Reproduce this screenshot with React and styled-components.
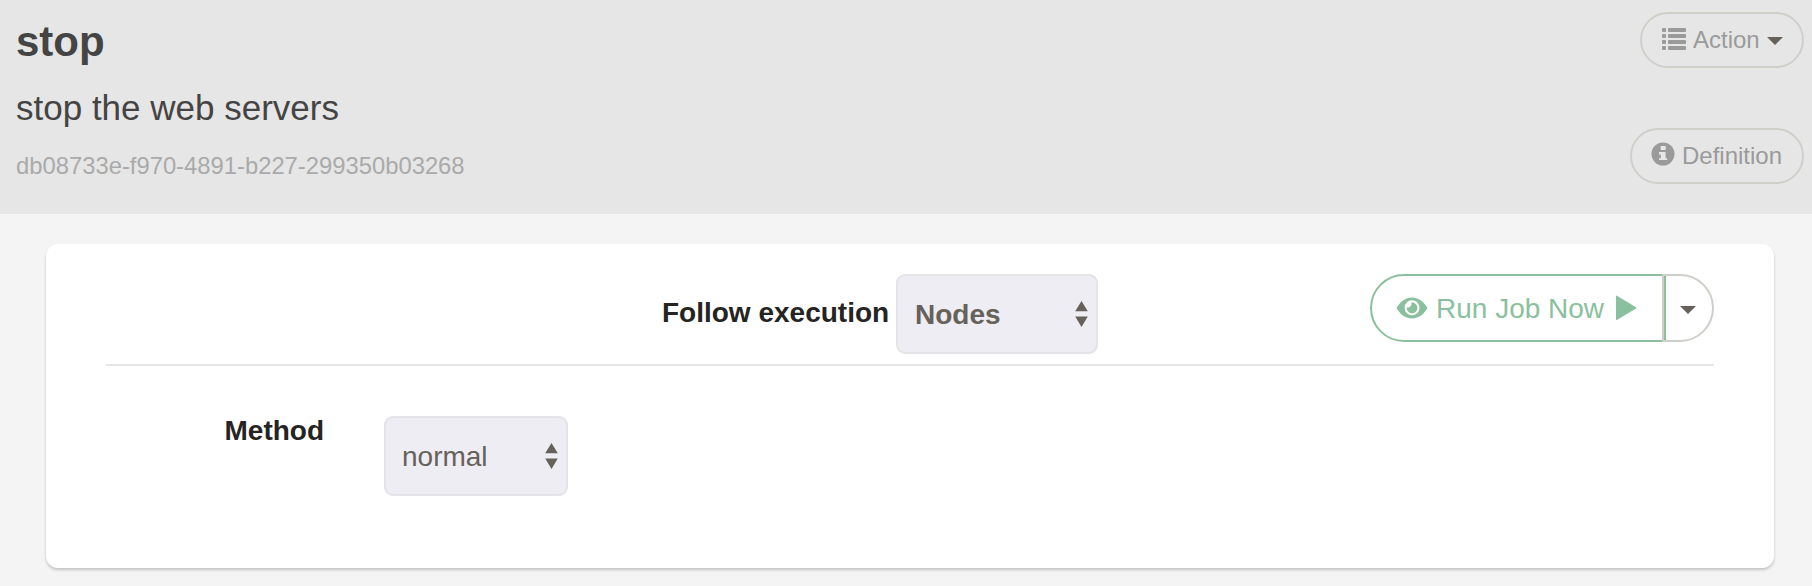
import React from "react";
import styled, { createGlobalStyle } from "styled-components";

const GlobalStyle = createGlobalStyle`
  * { box-sizing: border-box; }
  body {
    margin: 0;
    background: #f4f4f4;
    font-family: "Liberation Sans", Arial, Helvetica, sans-serif;
  }
  svg { display: block; flex: none; }
`;

const Page = styled.div`
  min-height: 586px;
`;

const Header = styled.header`
  display: flex;
  justify-content: space-between;
  height: 214px;
  padding: 12px 8px 30px 16px;
  background: #e6e6e6;
`;

const JobInfo = styled.div`
  display: flex;
  flex-direction: column;
`;

const Title = styled.h1`
  margin: 6px 0 0;
  font-size: 42px;
  line-height: 48px;
  color: #444;
`;

const Description = styled.p`
  margin: 22px 0 0;
  font-size: 35px;
  line-height: 40px;
  color: #444;
`;

const JobId = styled.small`
  margin-top: 24px;
  font-size: 23.8px;
  line-height: 28px;
  color: #aaa;
`;

const HeaderActions = styled.div`
  display: flex;
  flex-direction: column;
  align-items: flex-end;
  justify-content: space-between;
`;

const PillButton = styled.button`
  display: flex;
  align-items: center;
  width: ${(p) => p.$width}px;
  height: 56px;
  padding: 0 0 1px ${(p) => p.$inset}px;
  border: 2px solid #cfcfca;
  border-radius: 28px;
  background: transparent;
  color: #9a9a9a;
  font: 24px "Liberation Sans", Arial, sans-serif;
  white-space: nowrap;

  > svg:first-child {
    margin-bottom: ${(p) => p.$iconLift}px;
  }

  > svg:last-child {
    margin-top: 3px;
  }
`;

const PillLabel = styled.span`
  margin: 0 7px 0 ${(p) => p.$gap}px;
`;

const Card = styled.main`
  height: 324px;
  margin: 30px 38px 0 46px;
  padding: 30px 60px;
  border-radius: 12px;
  background: #fff;
  box-shadow: 0 2px 3px rgba(0, 0, 0, 0.2);
`;

const RunBar = styled.div`
  display: flex;
  align-items: flex-start;
  height: 92px;
  padding-left: 556px;
  border-bottom: 2px solid #e5e5e5;
`;

const OptionRow = styled.div`
  display: flex;
  align-items: flex-start;
  padding: 50px 0 0 118.5px;
`;

const Label = styled.label`
  width: ${(p) => p.$width}px;
  padding-top: ${(p) => p.$top}px;
  color: #252422;
  font-size: 28px;
  font-weight: bold;
  line-height: 30px;
  white-space: nowrap;
`;

const SelectBox = styled.div`
  display: flex;
  align-items: center;
  justify-content: space-between;
  width: ${(p) => p.$width}px;
  height: 80px;
  padding: 0 8px 0 ${(p) => p.$inset}px;
  border: 2px solid #e3e3e8;
  border-radius: 9px;
  background: #eeedf3;
  color: #66615b;
  font-size: 28px;
  font-weight: ${(p) => (p.$bold ? "bold" : "normal")};
`;

const SelectValue = styled.span`
  padding-top: 2px;
`;

const ButtonGroup = styled.div`
  display: flex;
  margin-left: auto;
`;

const RunButton = styled.button`
  display: flex;
  align-items: center;
  width: 296px;
  height: 68px;
  padding: 0 0 0 24px;
  border: 2px solid #8bc09e;
  border-radius: 34px 0 0 34px;
  background: transparent;
  color: #8bc09e;
  font: 28px "Liberation Sans", Arial, sans-serif;
  white-space: nowrap;

  > svg {
    margin-bottom: 1px;
  }
`;

const RunLabel = styled.span`
  margin: 0 12px 0 8px;
  padding-top: 1px;
`;

const RunMenuButton = styled.button`
  display: flex;
  align-items: center;
  justify-content: center;
  width: 52px;
  height: 68px;
  margin-left: -4px;
  padding: 4px 0 0;
  border: 2px solid #cfcfca;
  border-radius: 0 34px 34px 0;
  background: transparent;
`;

const ListIcon = () => (
  <svg width="24" height="22" viewBox="0 0 24 22" fill="currentColor">
    {[0, 6, 12, 18].map((y) => (
      <React.Fragment key={y}>
        <rect x="0" y={y} width="4" height="4" rx="1" />
        <rect x="6" y={y} width="18" height="4" rx="1" />
      </React.Fragment>
    ))}
  </svg>
);

const InfoIcon = () => (
  <svg width="24" height="24" viewBox="0 0 24 24" fill="currentColor">
    <path
      fillRule="evenodd"
      d="M12 .5a11.5 11.5 0 1 1 0 23a11.5 11.5 0 0 1 0-23zM9.7 4v4h5V4zM8 10v2.5h1.8v3.8H8V18h8.2v-1.7h-1.6V10z"
    />
  </svg>
);

const EyeIcon = () => (
  <svg width="32" height="22" viewBox="0 0 32 22">
    <path
      fill="currentColor"
      fillRule="evenodd"
      d="M.5 11C4.5 4 10 .5 16 .5S27.500 4 31.500 11C27.500 18 22 21.500 16 21.500S4.500 18 .5 11zM16 3.300a7.500 7.500 0 1 0 0 15a7.500 7.500 0 0 0 0-15z"
    />
    <path
      fill="currentColor"
      d="M15.200 5.500A5.400 5.400 0 1 1 10.700 10C11.200 10.700 12.200 10.800 13.400 10.200C15.200 9.200 15.900 7.600 15.200 5.500z"
    />
  </svg>
);

const PlayIcon = () => (
  <svg width="21" height="26" viewBox="0 0 21 26" fill="currentColor">
    <path d="M0 1.200Q0 .3 .9 .7L20 12.200Q21 13 20 13.600L.9 25.100Q0 25.500 0 24.600z" />
  </svg>
);

const CaretIcon = () => (
  <svg width="16" height="8" viewBox="0 0 16 8" fill="#66615b">
    <path d="M0 0h16L8 8z" />
  </svg>
);

const StepperIcon = () => (
  <svg width="13" height="26" viewBox="0 0 13 26" fill="#66615b">
    <path d="M6.500 0L12.800 10.300H.2zM.2 15.500h12.600L6.500 26z" />
  </svg>
);

export default function App() {
  return (
    <Page>
      <GlobalStyle />
      <Header>
        <JobInfo>
          <Title>stop</Title>
          <Description>stop the web servers</Description>
          <JobId>db08733e-f970-4891-b227-299350b03268</JobId>
        </JobInfo>
        <HeaderActions>
          <PillButton $width={164} $inset={20} $iconLift={1}>
            <ListIcon />
            <PillLabel $gap={7}>Action</PillLabel>
            <CaretIcon />
          </PillButton>
          <PillButton $width={174} $inset={19} $iconLift={3}>
            <InfoIcon />
            <PillLabel $gap={7}>Definition</PillLabel>
          </PillButton>
        </HeaderActions>
      </Header>
      <Card>
        <RunBar>
          <Label $width={234} $top={24}>Follow execution</Label>
          <SelectBox $width={202} $inset={17} $bold>
            <SelectValue>Nodes</SelectValue>
            <StepperIcon />
          </SelectBox>
          <ButtonGroup>
            <RunButton>
              <EyeIcon />
              <RunLabel>Run Job Now</RunLabel>
              <PlayIcon />
            </RunButton>
            <RunMenuButton aria-label="Run options">
              <CaretIcon />
            </RunMenuButton>
          </ButtonGroup>
        </RunBar>
        <OptionRow>
          <Label $width={159.5} $top={0}>Method</Label>
          <SelectBox $width={184} $inset={16}>
            <SelectValue>normal</SelectValue>
            <StepperIcon />
          </SelectBox>
        </OptionRow>
      </Card>
    </Page>
  );
}
